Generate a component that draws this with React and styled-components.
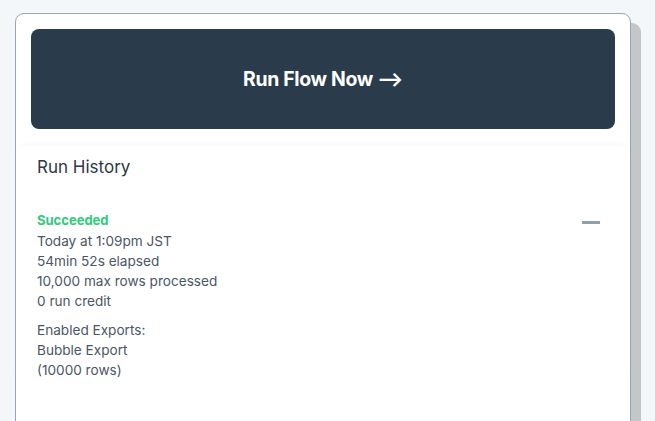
import React from 'react'
import styled, { createGlobalStyle } from 'styled-components'

const GlobalStyle = createGlobalStyle`
  html, body {
    margin: 0;
    padding: 0;
    background: #f4f7fa;
    font-family: Inter, 'Noto Sans', sans-serif;
    overflow: hidden;
  }
`

const Page = styled.div`
  padding: 13px 0 0 15px;
  height: 421px;
  box-sizing: border-box;
  overflow: hidden;
`

const Card = styled.div`
  width: 616px;
  height: 440px;
  box-sizing: border-box;
  background: #fff;
  border: 1px solid #97a6b3;
  border-radius: 9px;
  box-shadow: 10px 10px 0 #c4c7ca;
  padding: 15px 15px 0 15px;
`

const RunButton = styled.button`
  display: flex;
  align-items: center;
  justify-content: center;
  width: 100%;
  height: 100px;
  border: 0;
  border-radius: 8px;
  background: #2a3c4c;
  color: #fff;
  font-family: Inter, sans-serif;
  font-weight: 700;
  font-size: 19.4px;
  letter-spacing: -0.3px;
  cursor: pointer;
`

const Section = styled.section`
  margin: 17px -15px 0;
  padding: 9px 30px 0 21px;
  box-shadow: 0 -4px 6px -4px rgba(120, 140, 160, 0.12);
  border-radius: 10px 10px 0 0;
`

const Title = styled.h2`
  margin: 0;
  font-size: 17px;
  font-weight: 400;
  color: #2b3846;
  line-height: 24px;
`

const Entry = styled.div`
  display: flex;
  justify-content: space-between;
  align-items: flex-start;
  margin-top: 32px;
`

const Details = styled.div`
  display: flex;
  flex-direction: column;
  gap: 9px;
`

const Lines = styled.div`
  font-size: 13.6px;
  line-height: 20px;
  color: #4a5665;
`

const Status = styled.div`
  font-size: 13px;
  font-weight: 700;
  color: #2fcc7c;
  line-height: 18px;
  margin-bottom: 2px;
`

const Collapse = styled.div`
  width: 18px;
  height: 3px;
  margin-top: 10px;
  background: #8fa0ae;
`

export default function App() {
  return (
    <>
      <GlobalStyle />
      <Page>
        <Card>
          <RunButton>Run Flow Now ⟶</RunButton>
          <Section>
            <Title>Run History</Title>
            <Entry>
              <Details>
                <Lines>
                  <Status>Succeeded</Status>
                  <div>Today at 1:09pm JST</div>
                  <div>54min 52s elapsed</div>
                  <div>10,000 max rows processed</div>
                  <div>0 run credit</div>
                </Lines>
                <Lines>
                  <div>Enabled Exports:</div>
                  <div>Bubble Export</div>
                  <div>(10000 rows)</div>
                </Lines>
              </Details>
              <Collapse />
            </Entry>
          </Section>
        </Card>
      </Page>
    </>
  )
}
